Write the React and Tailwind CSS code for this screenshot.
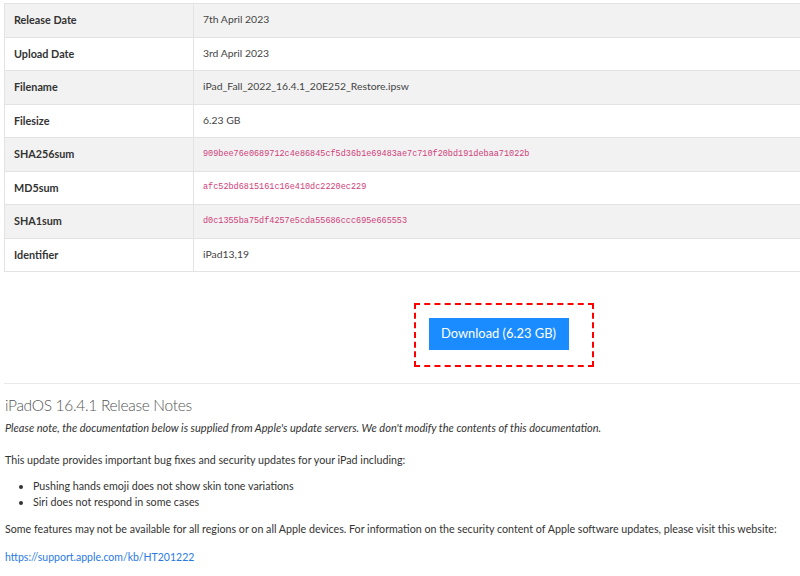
import React from "react";

const rows = [
  ["Release Date", "7th April 2023", false],
  ["Upload Date", "3rd April 2023", false],
  ["Filename", "iPad_Fall_2022_16.4.1_20E252_Restore.ipsw", false],
  ["Filesize", "6.23 GB", false],
  ["SHA256sum", "909bee76e0689712c4e86845cf5d36b1e69483ae7c710f20bd191debaa71022b", true],
  ["MD5sum", "afc52bd6815161c16e410dc2220ec229", true],
  ["SHA1sum", "d0c1355ba75df4257e5cda55686ccc695e665553", true],
  ["Identifier", "iPad13,19", false],
];

export default function App() {
  return (
    <div
      className="w-[800px] h-[576px] overflow-hidden bg-white text-[#333]"
      style={{ fontFamily: 'Lato, "Noto Sans", sans-serif' }}
    >
      <div className="pt-[3px] pl-[4px]">
        <div className="border-l border-t border-[#e3e3e3]">
          {rows.map(([k, v, mono], i) => (
            <div
              key={k}
              className={`flex h-[33.5px] border-b border-[#e3e3e3] ${i % 2 === 0 ? "bg-[#f2f2f2]" : "bg-white"}`}
            >
              <div className="w-[189px] shrink-0 border-r border-[#e3e3e3] pl-[9px] flex items-center text-[10.8px] font-bold">
                {k}
              </div>
              <div className="pl-[9px] flex items-center">
                {mono ? (
                  <span
                    className="text-[8.5px] text-[#d0407a]"
                    style={{ fontFamily: '"Liberation Mono", "DejaVu Sans Mono", monospace' }}
                  >
                    {v}
                  </span>
                ) : (
                  <span className="text-[10.4px] text-[#444]">{v}</span>
                )}
              </div>
            </div>
          ))}
        </div>
      </div>

      <div className="flex justify-center pl-[207px] mt-[31px]">
        <div className="border-2 border-dashed border-[#ff0000] w-[180px] h-[64px] flex items-center justify-center pr-[10px] pb-[3px]">
          <div className="bg-[#1a8cff] text-white text-[12.9px] w-[140px] h-[32px] flex items-center justify-center">
            Download (6.23 GB)
          </div>
        </div>
      </div>

      <div className="ml-[4px] mt-[16px] border-t border-[#e8e8e8]" />

      <div className="pl-[5px] pt-[10px]">
        <div className="text-[15.5px] tracking-[-0.3px] font-light text-[#555] leading-[22px]">iPadOS 16.4.1 Release Notes</div>
        <div className="text-[11px] italic text-[#333] mt-[4px] leading-[16px]">
          Please note, the documentation below is supplied from Apple's update servers. We don't modify the contents of this documentation.
        </div>
        <div className="text-[10.7px] mt-[16px] leading-[16px]">
          This update provides important bug fixes and security updates for your iPad including:
        </div>
        <ul className="list-disc pl-[28px] mt-[10px] text-[10.7px] leading-[16px]">
          <li>Pushing hands emoji does not show skin tone variations</li>
          <li>Siri does not respond in some cases</li>
        </ul>
        <div className="text-[10.7px] mt-[11px] leading-[16px] whitespace-nowrap">
          Some features may not be available for all regions or on all Apple devices. For information on the security content of Apple software updates, please visit this website:
        </div>
        <div className="text-[10.5px] mt-[12px] leading-[16px] text-[#2a7ae2]">https://support.apple.com/kb/HT201222</div>
      </div>
    </div>
  );
}
